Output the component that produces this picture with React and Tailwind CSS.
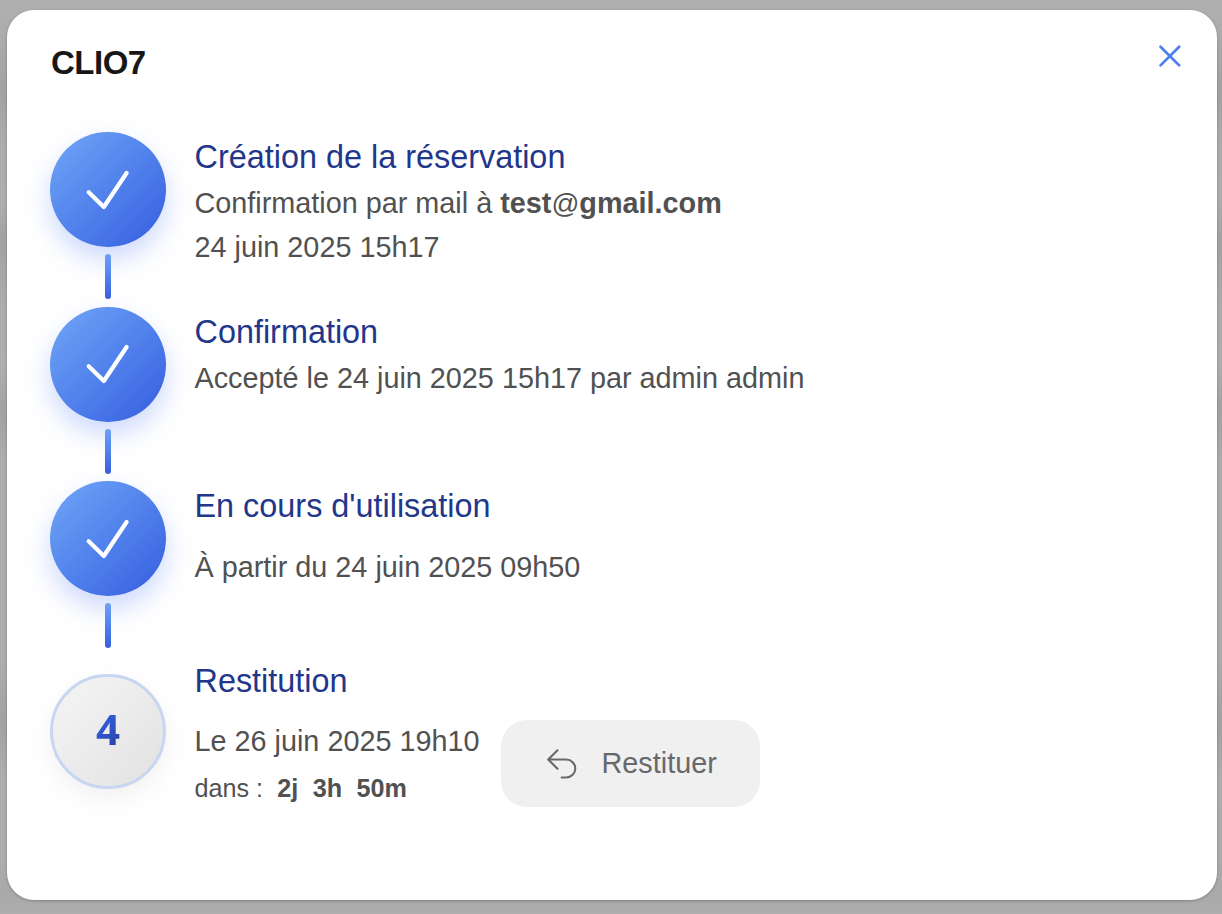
import React from "react";

function Check() {
  return (
    <svg width="116" height="116" viewBox="0 0 116 116" fill="none" stroke="white" strokeWidth="4.2" strokeLinecap="round" strokeLinejoin="round">
      <path d="M38.7 60.2 53.8 75 76.6 41" />
    </svg>
  );
}

function Step({ number, title, titleGap, children }) {
  return (
    <li className="flex h-[174.67px] gap-[28.5px]">
      <div className="flex w-[116px] shrink-0 flex-col items-center">
        {number ? (
          <div className="mt-[18px] flex h-[115px] w-[116px] items-center justify-center rounded-full border-3 border-[#c7d7f2] bg-linear-135 from-[#f5f5f5] to-[#e2e2e2] shadow-[0_10px_28px_rgba(0,0,0,0.06)]">
            <span className="bg-linear-135 from-[#3a6cf0] to-[#26389c] bg-clip-text pb-[4px] font-['Noto_Sans',sans-serif] text-[42px] leading-[48px] font-bold text-transparent">
              {number}
            </span>
          </div>
        ) : (
          <>
            <div className="flex h-[115px] w-[116px] items-center justify-center rounded-full bg-linear-135 from-[#72a6f7] to-[#365cdf] shadow-[0_12px_26px_rgba(59,110,245,0.26)]">
              <Check />
            </div>
            <div className="relative mt-[7px] h-[45px] w-[6px] rounded-full bg-linear-to-b from-[#6ea2f5] to-[#395fe0]" />
          </>
        )}
      </div>
      <div className="pt-[5px]">
        <h2 className={"text-[32.4px] leading-[40px] whitespace-nowrap text-[#22368a] " + titleGap}>{title}</h2>
        {children}
      </div>
    </li>
  );
}

export default function App() {
  return (
    <div className="h-[914px] w-[1222px] overflow-hidden bg-[linear-gradient(180deg,#b0b0b0_0px,#aaaaaa_50px,#a2a2a2_88px,#adadad_150px,#aeaeae_200px,#a2a2a2_242px,#adadad_310px,#aeaeae_370px,#a2a2a2_410px,#adadad_460px,#adadad_660px,#a2a2a2_722px,#aeaeae_780px,#adadad_850px,#a9a9a9_890px,#adadad_914px)] pt-[10px] pr-[5px] pb-[14px] pl-[7px] font-['Liberation_Sans',Arial,sans-serif]">
      <main className="h-[890px] w-[1210px] rounded-[27px] bg-white px-[43px] shadow-[0_1px_3px_rgba(0,0,0,0.25)]">
        <header className="flex h-[122px] items-start justify-between">
          <h1 className="ml-[1px] pt-[33px] text-[33px] leading-[40px] font-bold tracking-[-0.5px] text-[#171717]">CLIO7</h1>
          <button aria-label="Fermer" className="mt-[34px] -mr-[8px]">
            <svg width="24" height="24" viewBox="0 0 24 24" fill="none" stroke="#4b7eee" strokeWidth="2.7" strokeLinecap="round">
              <path d="M2.5 2.7 21.2 21.4M21.2 2.7 2.5 21.4" />
            </svg>
          </button>
        </header>
        <ol className="text-[28.8px] leading-[44px] whitespace-nowrap text-[#515151]">
          <Step title="Création de la réservation" titleGap="mb-[4px]">
            <p>Confirmation par mail à <b>test<span className="text-[27.5px] leading-none font-normal">@</span>gmail.com</b></p>
            <p>24 juin 2025 15h17</p>
          </Step>
          <Step title="Confirmation" titleGap="mb-[4px]">
            <p>Accepté le 24 juin 2025 15h17 par admin admin</p>
          </Step>
          <Step title="En cours d'utilisation" titleGap="mb-[19px]">
            <p>À partir du 24 juin 2025 09h50</p>
          </Step>
          <Step number="4" title="Restitution" titleGap="mb-[18px]">
            <div className="flex gap-[21.5px]">
              <div>
                <p>Le 26 juin 2025 19h10</p>
                <p className="pt-[4px] text-[25.2px] leading-[43px]">
                  dans : <b className="ml-[7px]">2j</b> <b className="ml-[7.5px]">3h</b> <b className="ml-[7.5px]">50m</b>
                </p>
              </div>
              <button className="mt-[1px] flex h-[87px] w-[259px] items-center rounded-[26px] bg-[#f0f0f0] pl-[44px] text-[#68686c]">
                <svg width="34" height="34" viewBox="0 0 34 34" fill="none" stroke="currentColor" strokeWidth="2.1" strokeLinecap="round" strokeLinejoin="round">
                  <path d="M12.5 4.3 3.2 13.5 12.5 22.8M3.2 13.5H21.3A9 9 0 0 1 21.3 31.5H16.7" />
                </svg>
                <span className="ml-[22.5px]">Restituer</span>
              </button>
            </div>
          </Step>
        </ol>
      </main>
    </div>
  );
}
